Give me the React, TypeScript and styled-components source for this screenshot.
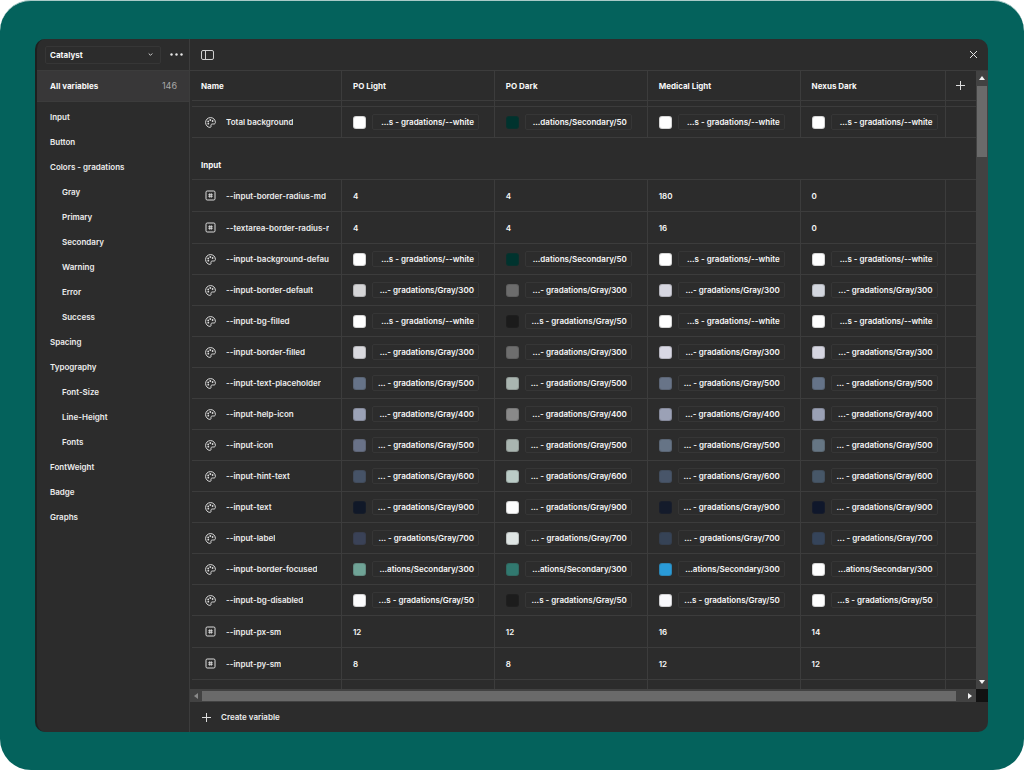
import React from "react";
import styled, { createGlobalStyle } from "styled-components";

const color = {
  teal: "#04625c",
  surface: "#2c2c2c",
  raised: "#383738",
  line: "#3c3c3c",
  chipLine: "#363636",
  text: "#ececec",
  strong: "#f8f8f8",
  muted: "#a8a8a8",
  track: "#424242",
  thumb: "#6a6a6a",
};

const GlobalStyle = createGlobalStyle`
  *, *::before, *::after { box-sizing: border-box; }
  body {
    margin: 0;
    background: #ffffff;
    font-family: Inter, "Liberation Sans", sans-serif;
    font-size: 8px;
    line-height: 12px;
    color: ${color.text};
  }
  button, select { font: inherit; color: inherit; }
  button {
    padding: 0;
    border: 0;
    background: none;
    cursor: pointer;
  }
  svg { display: block; }
`;

const Backdrop = styled.main`
  display: flex;
  height: 100vh;
  min-height: 400px;
  padding: 38px 36px 38px 35px;
  border-top: 1px solid #a9cac7;
  border-radius: 31px;
  background: ${color.teal};
`;

const Dialog = styled.section`
  display: flex;
  flex: 1;
  min-width: 0;
  overflow: hidden;
  border-left: 2px solid #1d1f1f;
  border-radius: 10px;
  background: ${color.surface};
`;

const Sidebar = styled.aside`
  display: flex;
  flex-direction: column;
  flex: 0 0 153px;
  border-right: 1px solid ${color.line};
`;

const Bar = styled.header`
  display: flex;
  align-items: center;
  flex: 0 0 32px;
  border-bottom: 1px solid ${color.line};
`;

const SidebarBar = styled(Bar)`
  justify-content: space-between;
  padding: 0 6px 0 8px;
`;

const MainBar = styled(Bar)`
  justify-content: space-between;
  padding: 0 10px 0 11px;
`;

const SelectBox = styled.label`
  display: grid;
  flex: 0 0 116px;
  align-items: center;

  select, svg { grid-area: 1 / 1; }
  svg {
    justify-self: end;
    margin-right: 7px;
    pointer-events: none;
  }
`;

const CollectionSelect = styled.select`
  appearance: none;
  width: 100%;
  height: 18px;
  padding: 0 16px 0 4px;
  border: 1px solid ${color.chipLine};
  border-radius: 2px;
  background: transparent;
  font-weight: 700;
  color: ${color.strong};

  option { background: ${color.surface}; }
`;

const IconButton = styled.button`
  display: grid;
  place-items: center;
  min-width: 10px;
  height: 16px;
`;

const AllVariables = styled.button`
  display: flex;
  align-items: center;
  justify-content: space-between;
  flex: 0 0 31px;
  padding: 0 12px 0 13px;
  border-bottom: 1px solid ${color.line};
  background: ${color.raised};
  font-weight: 700;
  color: ${color.strong};
`;

const Count = styled.span`
  font-size: 9px;
  font-weight: 400;
  color: ${color.muted};
`;

const GroupList = styled.ul`
  margin: 0;
  padding: 2px 0 0;
  list-style: none;
`;

const GroupItem = styled.button<{ $nested?: boolean }>`
  display: block;
  width: 100%;
  height: 25px;
  padding-left: ${(p) => (p.$nested ? 25 : 13)}px;
  text-align: left;
  font-weight: 600;
`;

const Main = styled.div`
  display: flex;
  flex-direction: column;
  flex: 1;
  min-width: 0;
`;

const Scroller = styled.div`
  display: grid;
  grid-template-columns: minmax(0, 1fr) 12px;
  grid-template-rows: minmax(0, 1fr) 13px;
  flex: 1;
  min-height: 0;
`;

const Viewport = styled.div`
  overflow: hidden;
  padding-left: 2px;
`;

const VariableTable = styled.table`
  width: 100%;
  table-layout: fixed;
  border-collapse: separate;
  border-spacing: 0;
`;

const NameCol = styled.col`
  width: 19%;
`;

const ModeCol = styled.col<{ $last?: boolean }>`
  width: ${(p) => (p.$last ? "auto" : "19.5%")};
`;

const ActionCol = styled.col`
  width: 31px;
`;

const Cell = styled.td<{ $height?: number }>`
  height: ${(p) => p.$height ?? 31}px;
  padding: 0 6px 0 11px;
  border-bottom: 1px solid ${color.line};
  border-left: 1px solid ${color.line};
  font-weight: 600;
  text-align: left;
  color: ${color.strong};
`;

const HeadCell = styled(Cell)`
  font-weight: 700;

  &:first-child {
    padding-left: 9px;
    border-left: 0;
  }
`;

const ActionHead = styled(HeadCell)`
  padding: 0 2px 0 0;
`;

const ActionButton = styled(IconButton)`
  width: 100%;
`;

const NameCell = styled(Cell)`
  padding: 0 12px 0 13px;
  border-left: 0;
`;

const GapCell = styled(Cell)`
  padding: 0;

  &:first-child { border-left: 0; }
`;

const GroupCell = styled.th`
  height: 42px;
  padding: 0 9px 8px;
  border-bottom: 1px solid ${color.line};
  vertical-align: bottom;
  text-align: left;
  font-weight: 700;
  color: ${color.strong};
`;

const NameLabel = styled.div`
  display: flex;
  align-items: center;
  gap: 10px;
  color: ${color.text};

  svg { flex: none; }
`;

const NameText = styled.span`
  overflow: hidden;
  white-space: nowrap;
`;

const ColorValue = styled.div`
  display: flex;
  align-items: center;
  gap: 6px;
`;

const Swatch = styled.span<{ $fill: string }>`
  flex: 0 0 13px;
  height: 13px;
  border: 1px solid rgba(44, 44, 44, 0.2);
  border-radius: 3px;
  background: ${(p) => p.$fill};
`;

const Chip = styled.button`
  flex: 1;
  max-width: 107px;
  height: 16px;
  padding-right: 4px;
  overflow: hidden;
  border: 1px solid ${color.chipLine};
  border-radius: 2px;
  text-align: right;
  white-space: nowrap;
`;

const VerticalBar = styled.div`
  display: flex;
  flex-direction: column;
  align-items: center;
  justify-content: space-between;
  padding: 4px 0;
  background: ${color.track};
`;

const VerticalTrack = styled.div`
  flex: 1;
  width: 10px;
  padding-top: 5px;
`;

const VerticalThumb = styled.div`
  height: 12%;
  background: ${color.thumb};
`;

const HorizontalBar = styled.div`
  display: flex;
  align-items: center;
  padding: 0 3px;
  background: ${color.track};
`;

const HorizontalTrack = styled.div`
  flex: 1;
  padding: 0 11px 0 3px;
`;

const HorizontalThumb = styled.div`
  height: 10px;
  background: ${color.thumb};
`;

const Corner = styled.div`
  background: #121212;
`;

const Footer = styled.footer`
  display: flex;
  align-items: center;
  flex: 0 0 30px;
  padding-left: 12px;
`;

const CreateButton = styled.button`
  display: flex;
  align-items: center;
  gap: 10px;
  font-weight: 600;
`;

const PaletteIcon = () => (
  <svg width="11" height="11" viewBox="0 0 11 11" fill="none" stroke="#dcdcdc">
    <path d="M5.5 .6C2.7 .6 .6 2.8 .6 5.5c0 2.6 1.9 4.8 4.3 4.9 .9 0 1.3-.7 1.1-1.4-.3-1.3 .3-2 1.500-2h1.300c1 0 1.600-.6 1.600-1.600C10.300 2.600 8.200 .6 5.500 .6Z" />
    <g fill="#dcdcdc" stroke="none">
      <circle cx="5.300" cy="3" r=".9" />
      <circle cx="3.200" cy="4.400" r=".9" />
      <circle cx="7.600" cy="4" r=".9" />
      <circle cx="3.300" cy="6.700" r=".9" />
    </g>
  </svg>
);

const NumberIcon = () => (
  <svg width="11" height="11" viewBox="0 0 11 11" fill="none" stroke="#dcdcdc">
    <rect x="1" y="1" width="9" height="9" rx="1.200" />
    <path d="M4.700 3.300v4.400M6.300 3.300v4.400M3.300 4.700h4.400M3.300 6.300h4.400" strokeWidth=".9" />
  </svg>
);

const PlusIcon = () => (
  <svg width="9" height="9" viewBox="0 0 9 9" stroke="#dedede">
    <path d="M4.500 0v9M0 4.500h9" />
  </svg>
);

const CloseIcon = () => (
  <svg width="9" height="9" viewBox="0 0 9 9" stroke="#e4e4e4">
    <path d="M1 1l7 7M8 1l-7 7" />
  </svg>
);

const DotsIcon = () => (
  <svg width="13" height="3" viewBox="0 0 13 3" fill="#e8e8e8">
    <circle cx="1.500" cy="1.500" r="1.200" />
    <circle cx="6.500" cy="1.500" r="1.200" />
    <circle cx="11.500" cy="1.500" r="1.200" />
  </svg>
);

const SidebarIcon = () => (
  <svg width="13" height="10" viewBox="0 0 13 10" fill="none" stroke="#cfcfcf">
    <rect x=".5" y=".5" width="12" height="9" rx="1.500" />
    <path d="M4.500 .5v9" />
  </svg>
);

const ChevronIcon = () => (
  <svg width="7" height="5" viewBox="0 0 7 5" fill="none" stroke="#d0d0d0">
    <path d="M1.700 1.500l1.800 1.800 1.800-1.800" />
  </svg>
);

const arrows = {
  up: "M0 5l3-4 3 4z",
  down: "M0 1l3 4 3-4z",
  left: "M5 0l-4 3 4 3z",
  right: "M1 0l4 3-4 3z",
};

const ArrowIcon = ({ to, fill = "#f4f4f4" }: { to: keyof typeof arrows; fill?: string }) => (
  <svg width="6" height="6" viewBox="0 0 6 6" fill={fill}>
    <path d={arrows[to]} />
  </svg>
);

const groups: { name: string; nested?: boolean }[] = [
  { name: "Input" },
  { name: "Button" },
  { name: "Colors - gradations" },
  { name: "Gray", nested: true },
  { name: "Primary", nested: true },
  { name: "Secondary", nested: true },
  { name: "Warning", nested: true },
  { name: "Error", nested: true },
  { name: "Success", nested: true },
  { name: "Spacing" },
  { name: "Typography" },
  { name: "Font-Size", nested: true },
  { name: "Line-Height", nested: true },
  { name: "Fonts", nested: true },
  { name: "FontWeight" },
  { name: "Badge" },
  { name: "Graphs" },
];

const modes = ["PO Light", "PO Dark", "Medical Light", "Nexus Dark"];

type Alias = [fill: string, label: string];
type Variable = { name: string; values: (number | Alias)[] };

const WHITE = "...s - gradations/--white";
const GRAY_50 = "...s - gradations/Gray/50";
const GRAY_300 = "...- gradations/Gray/300";
const GRAY_400 = "...- gradations/Gray/400";
const GRAY_500 = "... - gradations/Gray/500";
const GRAY_600 = "... - gradations/Gray/600";
const GRAY_700 = "... - gradations/Gray/700";
const GRAY_900 = "... - gradations/Gray/900";
const SECONDARY_50 = "...dations/Secondary/50";
const SECONDARY_300 = "...ations/Secondary/300";

const aliases = (label: string, ...fills: string[]): Alias[] => fills.map((fill) => [fill, label]);

const backgroundValues: Alias[] = [
  ["#ffffff", WHITE],
  ["#00332e", SECONDARY_50],
  ["#ffffff", WHITE],
  ["#ffffff", WHITE],
];

const totalBackground: Variable = { name: "Total background", values: backgroundValues };

const inputVariables: Variable[] = [
  { name: "--input-border-radius-md", values: [4, 4, 180, 0] },
  { name: "--textarea-border-radius-md", values: [4, 4, 16, 0] },
  { name: "--input-background-default", values: backgroundValues },
  { name: "--input-border-default", values: aliases(GRAY_300, "#d5d5d7", "#6c6c6c", "#d6d6e0", "#d3d6de") },
  {
    name: "--input-bg-filled",
    values: [["#ffffff", WHITE], ["#1b1b1b", GRAY_50], ["#ffffff", WHITE], ["#ffffff", WHITE]],
  },
  { name: "--input-border-filled", values: aliases(GRAY_300, "#d9d9de", "#6e6e6e", "#d9d8e4", "#d5d5e0") },
  { name: "--input-text-placeholder", values: aliases(GRAY_500, "#667388", "#a9b5b0", "#687488", "#657388") },
  { name: "--input-help-icon", values: aliases(GRAY_400, "#9ba2b6", "#898989", "#9ba1b6", "#9aa1b5") },
  { name: "--input-icon", values: aliases(GRAY_500, "#697288", "#a9b5b0", "#667486", "#667684") },
  { name: "--input-hint-text", values: aliases(GRAY_600, "#465367", "#bacbc6", "#485569", "#475768") },
  { name: "--input-text", values: aliases(GRAY_900, "#101828", "#fdfefe", "#141b2b", "#0f172b") },
  { name: "--input-label", values: aliases(GRAY_700, "#3a4257", "#dfe5e4", "#364356", "#35445a") },
  { name: "--input-border-focused", values: aliases(SECONDARY_300, "#6fa396", "#31786f", "#2a9bd8", "#ffffff") },
  { name: "--input-bg-disabled", values: aliases(GRAY_50, "#fcfcfd", "#1c1c1c", "#f9f9fc", "#ffffff") },
  { name: "--input-px-sm", values: [12, 12, 16, 14] },
  { name: "--input-py-sm", values: [8, 8, 12, 12] },
];

const VariableRow = ({ name, values }: Variable) => {
  const numeric = typeof values[0] === "number";
  const height = numeric ? 32 : 31;
  return (
    <tr>
      <NameCell $height={height}>
        <NameLabel>
          {numeric ? <NumberIcon /> : <PaletteIcon />}
          <NameText>{name}</NameText>
        </NameLabel>
      </NameCell>
      {values.map((value, i) => (
        <Cell key={modes[i]} $height={height}>
          {typeof value === "number" ? (
            value
          ) : (
            <ColorValue>
              <Swatch $fill={value[0]} />
              <Chip type="button">{value[1]}</Chip>
            </ColorValue>
          )}
        </Cell>
      ))}
      <Cell $height={height} />
    </tr>
  );
};

const GapRow = ({ height }: { height: number }) => (
  <tr aria-hidden="true">
    {["name", ...modes, "action"].map((key) => (
      <GapCell key={key} $height={height} />
    ))}
  </tr>
);

export default function App() {
  return (
    <>
      <GlobalStyle />
      <Backdrop>
        <Dialog aria-label="Variables">
          <Sidebar>
            <SidebarBar>
              <SelectBox>
                <CollectionSelect aria-label="Collection" defaultValue="Catalyst">
                  <option>Catalyst</option>
                </CollectionSelect>
                <ChevronIcon />
              </SelectBox>
              <IconButton type="button" aria-label="More options">
                <DotsIcon />
              </IconButton>
            </SidebarBar>
            <AllVariables type="button">
              All variables
              <Count>146</Count>
            </AllVariables>
            <nav aria-label="Groups">
              <GroupList>
                {groups.map(({ name, nested }) => (
                  <li key={name}>
                    <GroupItem type="button" $nested={nested}>
                      {name}
                    </GroupItem>
                  </li>
                ))}
              </GroupList>
            </nav>
          </Sidebar>
          <Main>
            <MainBar>
              <IconButton type="button" aria-label="Toggle sidebar">
                <SidebarIcon />
              </IconButton>
              <IconButton type="button" aria-label="Close">
                <CloseIcon />
              </IconButton>
            </MainBar>
            <Scroller>
              <Viewport>
                <VariableTable>
                  <colgroup>
                    <NameCol />
                    {modes.map((mode, i) => (
                      <ModeCol key={mode} $last={i === modes.length - 1} />
                    ))}
                    <ActionCol />
                  </colgroup>
                  <thead>
                    <tr>
                      <HeadCell as="th" scope="col" $height={30}>
                        Name
                      </HeadCell>
                      {modes.map((mode) => (
                        <HeadCell as="th" scope="col" key={mode} $height={30}>
                          {mode}
                        </HeadCell>
                      ))}
                      <ActionHead $height={30}>
                        <ActionButton type="button" aria-label="Add mode">
                          <PlusIcon />
                        </ActionButton>
                      </ActionHead>
                    </tr>
                  </thead>
                  <tbody>
                    <GapRow height={6} />
                    <VariableRow {...totalBackground} />
                    <tr>
                      <GroupCell colSpan={6} scope="colgroup">
                        Input
                      </GroupCell>
                    </tr>
                    {inputVariables.map((variable) => (
                      <VariableRow key={variable.name} {...variable} />
                    ))}
                    <GapRow height={31} />
                  </tbody>
                </VariableTable>
              </Viewport>
              <VerticalBar>
                <ArrowIcon to="up" />
                <VerticalTrack>
                  <VerticalThumb />
                </VerticalTrack>
                <ArrowIcon to="down" />
              </VerticalBar>
              <HorizontalBar>
                <ArrowIcon to="left" fill="#8a8a8a" />
                <HorizontalTrack>
                  <HorizontalThumb />
                </HorizontalTrack>
                <ArrowIcon to="right" />
              </HorizontalBar>
              <Corner />
            </Scroller>
            <Footer>
              <CreateButton type="button">
                <PlusIcon />
                Create variable
              </CreateButton>
            </Footer>
          </Main>
        </Dialog>
      </Backdrop>
    </>
  );
}
